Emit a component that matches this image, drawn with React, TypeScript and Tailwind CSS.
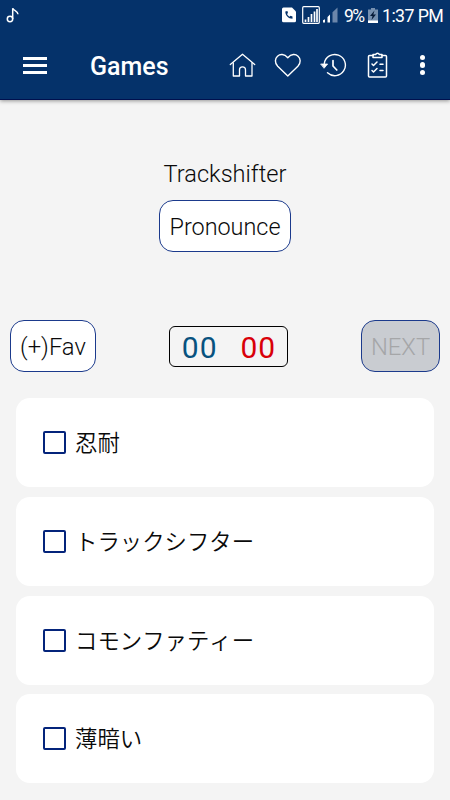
import { useState } from 'react';

const answers = ['忍耐', 'トラックシフター', 'コモンファティー', '薄暗い'];

function StatusBar() {
  return (
    <div className="flex h-8 items-center justify-between pl-[6px] pr-[6px]">
      <svg className="h-4 w-[14px]" viewBox="0 0 14 16" fill="none" stroke="#fff" strokeWidth="1.5">
        <circle cx="4" cy="11" r="2.700" />
        <path d="M6.700 11V0.200C7.300 3 11.800 2.500 12 6.200" />
      </svg>
      <div className="flex items-center text-white">
        <svg className="h-8 w-[60px]" viewBox="282 0 60 32">
          <path d="M283.5 7.5h8.5l4 4v9.200a1.500 1.500 0 0 1-1.500 1.500h-11a1.500 1.500 0 0 1-1.500-1.500V9a1.500 1.500 0 0 1 1.500-1.500z" fill="#fff" />
          <path d="M285.300 11.500c0 4 3 7.200 7.200 7.200v-2.200l-2-.7-1 1c-1.200-.6-2-1.500-2.500-2.700l1-1-.6-2z" fill="#05326a" />
          <rect x="302.700" y="6.700" width="16.600" height="16.600" rx="1" fill="none" stroke="#fff" strokeWidth="1.200" />
          <path d="M305.500 22v-2.500M308.500 22v-5M311.500 22v-8M314.500 22v-10.500M317 22V9" stroke="#fff" strokeWidth="1.700" />
          <path d="M323 22.500v-2.200l2-1v3.200zM327.500 22.500V17l2.500-2.500v8z" fill="#fff" />
          <path d="M332.500 22.500V12.300L337.500 7.500v15z" fill="#6c86aa" />
        </svg>
        <span className="ml-[2px] w-[20px] text-[17.500px] leading-8 tracking-[-1.500px]">9%</span>
        <svg className="ml-[3px] h-8 w-[12px]" viewBox="0 0 12 32">
          <path d="M1 9.500h3V8h4v1.500h3V23H1z" fill="#7690b0" />
          <path d="M1 20.500h10V23H1z" fill="#fff" />
          <path d="M7.500 10.500L3 16h2.500L4.500 20 9 14.500H6.300z" fill="#061a38" />
        </svg>
        <span className="ml-[3px] w-[62px] whitespace-nowrap text-[17.800px] leading-8 tracking-[-0.600px]">1:37 PM</span>
      </div>
    </div>
  );
}

function Toolbar() {
  return (
    <div className="flex h-[68px] items-center pl-[23px]">
      <button aria-label="Menu" className="mb-[2px] flex w-6 flex-col gap-[4px]">
        <span className="h-[3px] w-6 bg-white" />
        <span className="h-[3px] w-6 bg-white" />
        <span className="h-[3px] w-6 bg-white" />
      </button>
      <h1 className="ml-[43px] w-[139px] text-[25px] font-medium leading-none text-white">Games</h1>
      <svg className="h-[30px] w-[28px]" viewBox="229 51 28 30" fill="none" stroke="#fff" strokeWidth="1.300" strokeLinecap="round" strokeLinejoin="round">
        <path d="M230.300 64.500l12.200-10.300 12.200 10.300" />
        <path d="M233.300 63v13h6.200v-6.200a3 3 0 0 1 6 0V76h6.500V63" />
      </svg>
      <svg className="ml-[17px] h-[30px] w-[28px]" viewBox="274 51 28 30" fill="none" stroke="#fff" strokeWidth="1.400" strokeLinejoin="round">
        <path d="M287.800 76L277.700 66.200C271 59 280.500 49.500 287.800 57.700C295 49.500 304.600 59 297.900 66.200Z" />
      </svg>
      <svg className="ml-[17px] h-[30px] w-[28px]" viewBox="319 51 28 30" fill="none" stroke="#fff" strokeWidth="1.400" strokeLinecap="round">
        <path d="M324.300 63.500a10.600 10.600 0 1 1 3.200 9.300" />
        <path d="M321 64h6.600l-3.300 4z" fill="#fff" strokeWidth="0.800" />
        <path d="M333 60.500v5.500l3.800 4" strokeWidth="1.700" />
      </svg>
      <svg className="ml-[17px] h-[30px] w-[28px]" viewBox="364 51 28 30" fill="none" stroke="#fff" strokeWidth="1.500" strokeLinejoin="round" strokeLinecap="round">
        <path d="M373 55.500h-3.500a1 1 0 0 0-1 1V76a1 1 0 0 0 1 1h16a1 1 0 0 0 1-1V56.500a1 1 0 0 0-1-1H382" />
        <path d="M373 57.500v-3h2.700a1.900 1.900 0 0 1 3.600 0h2.700v3z" />
        <path d="M372 64l1.500 1.500 3.500-3.500M372 70.500l1.500 1.500 3.500-3.500M380 64.200h3M380 70.500h3" />
      </svg>
      <button aria-label="More" className="mb-[2px] ml-[27.500px] flex flex-col gap-[2px]">
        <span className="size-[5.500px] rounded-full bg-white" />
        <span className="size-[5.500px] rounded-full bg-white" />
        <span className="size-[5.500px] rounded-full bg-white" />
      </button>
    </div>
  );
}

export default function App() {
  const [checked, setChecked] = useState<string | null>(null);

  return (
    <div className="h-[800px] w-[450px] overflow-hidden bg-[#f4f4f4] font-['Roboto','Noto_Sans_CJK_JP',sans-serif] text-[#0a0a0a]">
      <header className="h-[100px] border-b border-[#00104e] bg-[#05326a] shadow-[0_1px_4px_rgba(0,0,0,0.4)]">
        <StatusBar />
        <Toolbar />
      </header>

      <section className="flex h-[220px] flex-col items-center pt-[60px]">
        <p className="text-[23.600px] font-light leading-7">Trackshifter</p>
        <button className="mt-3 h-[52px] w-[132px] rounded-[14px] border border-[#1b3a8c] bg-white pt-[4px] text-[23.400px] font-light">
          Pronounce
        </button>
      </section>

      <section className="flex h-[52px] items-center px-[10px]">
        <button className="h-[52px] w-[86px] rounded-[14px] border border-[#1b3a8c] bg-white pt-[4px] text-[23.800px] font-light">(+)Fav</button>
        <div className="ml-[73px] mr-[73px] flex h-[41px] w-[119px] items-center justify-center gap-[23px] rounded-[6px] border border-black pl-px pt-[3px] text-[30px] leading-none tracking-[1px]">
          <span className="text-[#07527f]">00</span>
          <span className="text-[#d90008]">00</span>
        </div>
        <button disabled className="h-[52px] w-[79px] rounded-[14px] border border-[#1b3a8c] bg-[#c9ccd1] pt-[4px] text-[23.800px] font-light text-[#a5a6a8]">
          NEXT
        </button>
      </section>

      <section className="flex flex-col gap-[9.800px] px-4 pt-[26px]">
        {answers.map((answer) => (
          <button
            key={answer}
            onClick={() => setChecked(answer)}
            className="flex h-[89px] items-center rounded-[14px] bg-white pl-[27px] text-left"
          >
            <span className={`size-[23px] rounded-[2px] border-2 border-[#04247b] ${checked === answer ? 'bg-[#04247b]' : ''}`} />
            <span className="ml-[9px] pt-px text-[22.400px] font-[350] leading-8 [font-kerning:none]">{answer}</span>
          </button>
        ))}
      </section>
    </div>
  );
}
